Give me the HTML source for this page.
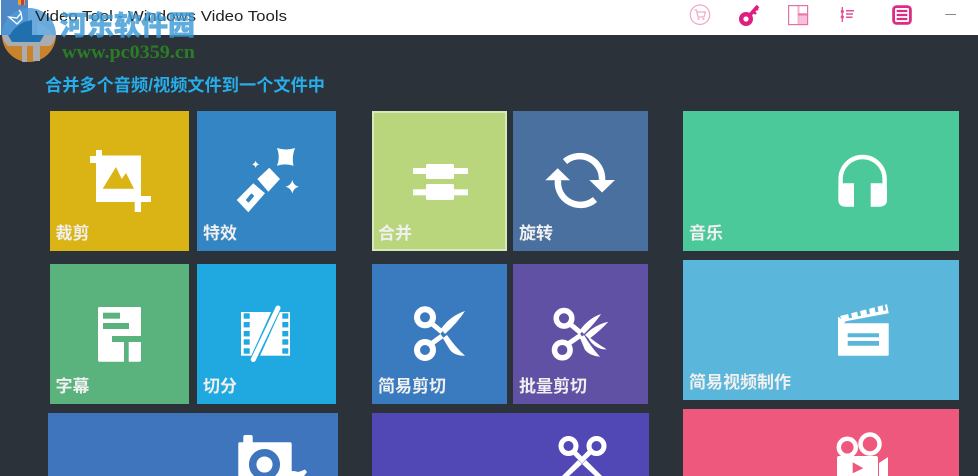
<!DOCTYPE html>
<html><head><meta charset="utf-8"><style>
html,body{margin:0;padding:0;width:978px;height:476px;overflow:hidden;background:#2b323a}
svg{display:block}
.l{font-family:"Liberation Sans","Noto Sans CJK SC",sans-serif;font-weight:700;font-size:17px;fill:#f0f0f0}
</style></head><body>
<svg width="978" height="476" viewBox="0 0 978 476" xmlns="http://www.w3.org/2000/svg">
<rect width="978" height="476" fill="#2b323a"/>
<rect width="978" height="35" fill="#fff"/>

<!-- toolbar icons -->
<g fill="none" stroke="#f3a6c8" stroke-width="1.200"><circle cx="700" cy="14.700" r="9.700"/><path d="M694.500 10h2l1.500 7h6l1.300-5h-8.300"/></g>
<circle cx="698.500" cy="19" r="1" fill="#f3a6c8"/><circle cx="703.500" cy="19" r="1" fill="#f3a6c8"/>
<g fill="none" stroke="#dd1f80"><circle cx="746" cy="19" r="4.800" stroke-width="4.400"/><path d="M750 15l8-9" stroke-width="3.600"/><path d="M753 11l3 3M755.500 8l2.500 2" stroke-width="2.400"/></g>
<rect x="798" y="15.500" width="9.600" height="9" fill="#f6c0da"/>
<rect x="797.500" y="5.500" width="2" height="19" fill="#f3b3d1"/>
<rect x="798" y="13.300" width="9.600" height="2.200" fill="#e878ae"/>
<rect x="788.600" y="5.600" width="19" height="19" fill="none" stroke="#e56fa9" stroke-width="1.200"/>
<g fill="none" stroke="#e0509a"><path d="M842.300 7v15" stroke-width="1.300"/><path d="M846 10.700h8M846 14h7M846 17.300h6.500" stroke-width="1.500"/></g>
<circle cx="842.300" cy="11.500" r="1.600" fill="#e0509a"/><circle cx="842.300" cy="17" r="1.600" fill="#e0509a"/>
<rect x="893.600" y="6.600" width="16.800" height="16.800" rx="3" fill="none" stroke="#dd2a85" stroke-width="2.800"/>
<path d="M896.700 11h10.600M896.700 15h10.600M896.700 19h10.600" stroke="#dd2a85" stroke-width="2.200"/>
<rect x="945.300" y="14" width="10.700" height="1" fill="#888"/>

<text x="45" y="91" font-family="Liberation Sans,Noto Sans CJK SC,sans-serif" font-weight="700" font-size="17.200" fill="#27aeea" textLength="280">合并多个音频/视频文件到一个文件中</text>

<!-- tiles -->
<rect x="50" y="111" width="139" height="140" fill="#dab315"/>
<rect x="197" y="111" width="139" height="140" fill="#3385c3"/>
<rect x="373" y="112" width="133" height="138" fill="#b9d67c" stroke="#d9e8b9" stroke-width="2"/>
<rect x="513" y="111" width="135" height="140" fill="#49709f"/>
<rect x="683" y="111" width="276" height="140" fill="#4cc99b"/>
<rect x="50" y="264" width="139" height="140" fill="#5ab37d"/>
<rect x="197" y="264" width="139" height="140" fill="#20a9e0"/>
<rect x="372" y="264" width="135" height="140" fill="#3a7bbf"/>
<rect x="513" y="264" width="135" height="140" fill="#6151a5"/>
<rect x="683" y="260" width="276" height="140" fill="#5ab6da"/>
<rect x="48" y="413" width="290" height="63" fill="#3e75bc"/>
<rect x="372" y="413" width="277" height="63" fill="#5148b5"/>
<rect x="683" y="409" width="276" height="67" fill="#ee587c"/>

<!-- labels -->
<text class="l" x="55.500" y="239">裁剪</text>
<text class="l" x="203" y="239">特效</text>
<text class="l" x="378" y="239">合并</text>
<text class="l" x="519" y="239">旋转</text>
<text class="l" x="689" y="239">音乐</text>
<text class="l" x="55.500" y="392">字幕</text>
<text class="l" x="203" y="392">切分</text>
<text class="l" x="378" y="392">简易剪切</text>
<text class="l" x="519" y="392">批量剪切</text>
<text class="l" x="689" y="388">简易视频制作</text>

<!-- crop -->
<path d="M96 155.500h45v46.500H96z" fill="#fff"/>
<path d="M90 156h6v7h-6zM96 150h6v6h-6zM141 196h10v6h-10zM134.700 202h6.300v10h-6.300z" fill="#fff"/>
<path d="M102.700 188.700L116 167l5.700 12 4.300-6 8 15.700z" fill="#dab315"/>

<!-- wand -->
<g fill="#fff">
<path d="M277 148Q286 151 295 148Q291.500 157 293.500 165.700Q285 163 277 165.700Q280.500 157 277 148z"/>
<path d="M292.300 180Q293.500 185.500 298.800 186.700Q293.500 188 292.300 193.500Q291 188 285.500 186.700Q291 185.500 292.300 180z"/>
<path d="M255.700 160.500Q256.200 163.800 259.500 164.300Q256.200 165 255.700 168Q255 165 252 164.300Q255 163.800 255.700 160.500z"/>
<path d="M257.300 179L269.300 167.700L280 179L268.300 191.700z"/>
<path d="M236.700 200L253.300 183.300L265 193.300L248.300 212.300z"/>
</g>
<rect x="-4.500" y="-2" width="9" height="4" rx="1" transform="translate(250 198) rotate(-50)" fill="#3385c3"/>

<!-- merge -->
<g fill="#fff"><rect x="413" y="168" width="55" height="6"/><rect x="413" y="189.300" width="55" height="6"/><rect x="426" y="164" width="28" height="15" rx="1.500"/><rect x="426" y="184" width="28" height="16" rx="1.500"/></g>

<!-- rotate -->
<g fill="none" stroke="#fff" stroke-width="6.500"><path d="M565 161.500A22.500 22.500 0 0 1 602 180"/><path d="M595 199.500A22.500 22.500 0 0 1 558 180"/></g>
<path d="M589.300 180h25.700l-12.900 12.500zM545.300 180.300h24.700l-12.300-12z" fill="#fff"/>

<!-- headphones -->
<path d="M840.600 190v-11a22 22 0 0 1 44 0v11" fill="none" stroke="#fff" stroke-width="4.400"/>
<path d="M838.300 189q0-5.700 6-5.700h9.700v23.400h-8q-7.700 0-7.700-7zM887 189q0-5.700-6-5.700h-10.300v23.400h8q8.300 0 8.300-7z" fill="#fff"/>

<!-- subtitle doc -->
<path d="M98 308.500q0-1.500 1.500-1.500h40q1.500 0 1.500 1.500V360q0 1.700-1.500 1.700H99.500q-1.500 0-1.500-1.700z" fill="#fff"/>
<rect x="103" y="312.700" width="17" height="6" fill="#5ab37d"/>
<rect x="103" y="323" width="26" height="6" fill="#5ab37d"/>
<rect x="112" y="336" width="29" height="6" fill="#5ab37d"/>
<rect x="124" y="342" width="4.700" height="20" fill="#5ab37d"/>

<!-- film -->
<rect x="241" y="312" width="49" height="43.700" fill="#fff"/>
<g fill="#20a9e0">
<rect x="243.700" y="313.300" width="6" height="5.400"/><rect x="243.700" y="322" width="6" height="5.400"/><rect x="243.700" y="331" width="6" height="5.400"/><rect x="243.700" y="339.300" width="6" height="5.400"/><rect x="243.700" y="348.300" width="6" height="5.400"/>
<rect x="282.300" y="313.300" width="6" height="5.400"/><rect x="282.300" y="322" width="6" height="5.400"/><rect x="282.300" y="331" width="6" height="5.400"/><rect x="282.300" y="339.300" width="6" height="5.400"/><rect x="282.300" y="348.300" width="6" height="5.400"/>
</g>
<path d="M278 306.500L253.300 361" stroke="#20a9e0" stroke-width="8"/>
<path d="M278 308L253.300 359.500" stroke="#fff" stroke-width="5" stroke-linecap="round"/>

<!-- scissors 1 -->
<g fill="none" stroke="#fff" stroke-width="6"><circle cx="425" cy="317.300" r="8"/><circle cx="425" cy="350" r="8"/></g>
<path d="M431 323l11 9M431 344l11-8" fill="none" stroke="#fff" stroke-width="5"/>
<path d="M441 329Q450 316 465 311Q458 322 445 334zM442.700 338L447 335Q456 348 465 355.700Q455 356 450 350z" fill="#fff"/>

<!-- scissors 2 -->
<g fill="none" stroke="#fff" stroke-width="5.500"><circle cx="564" cy="318.300" r="7.800"/><circle cx="562.300" cy="350" r="7.800"/></g>
<path d="M570 324l11 9M568 344l13-9" fill="none" stroke="#fff" stroke-width="5"/>
<path d="M580 330Q589 318 601 314Q596 322 584 334zM585 335Q594 325 608.300 321.700Q601 330 589 339zM580 338L584 335Q591 347 600 356.700Q590 356 585 350zM586.700 335Q596 343 606.700 349.300Q597 350 590 341z" fill="#fff"/>

<!-- clapper -->
<path d="M838 323.300h50.700v31.400q0 1-1 1H839q-1 0-1-1z" fill="#fff"/>
<path d="M847.700 333.300H879v4h-31.300zM847.700 341H879v4.700h-31.300z" fill="#5ab6da"/>
<path d="M838 316.700v11l7.700-6z" fill="#fff"/>
<path d="M840 316L887 304.300L888.700 313.300L843 321.700z" fill="#fff"/>
<g fill="#5ab6da"><path d="M848 313l3-.7 1 5.500-3 .6zM857 311l3-.7 1 5.500-3 .6zM866 309l3-.7 1 5.500-3 .6zM874.500 307l3-.7 1 5.500-3 .6zM882.500 305.500l2.500-.6 1 5.500-2.500.5z"/></g>

<!-- camera bottom-left -->
<path d="M238.300 443.500q0-1.200 1.200-1.200h3.800V437q0-2 2-2h5.400q2 0 2 2v5.300h37q2 0 2 2V476H238.300z" fill="#fff"/>
<circle cx="264.500" cy="464.500" r="11.800" fill="#fff" stroke="#3e75bc" stroke-width="7.500"/>
<path d="M278 476Q280 469 284 470Q288 473 292 471Q296 471 298 472Q302 471 305 469.500L307 472L304 476z" fill="#fff"/>

<!-- scissors bottom -->
<g fill="none" stroke="#fff" stroke-width="5"><circle cx="568.500" cy="446" r="7.500"/><circle cx="596.500" cy="446" r="7.500"/><path d="M574 452l8 8 8-8"/></g>
<path d="M578 460l4 4-13 12h-7zM586 460l-4 4 13 12h7z" fill="#fff"/>

<!-- video camera -->
<g fill="none" stroke="#fff" stroke-width="4.500"><circle cx="847.300" cy="447.300" r="8.500"/><circle cx="870" cy="444" r="9.500"/></g>
<path d="M837 458q0-2 2-2h37q2 0 2 2v18h-41zM879 463l9-6v19h-9z" fill="#fff"/>
<path d="M852.700 462.300l10.600 6-10.600 5z" fill="#ee587c"/>

<!-- watermark logo -->
<path d="M2 35a27 27 0 0 0 54 0z" fill="#c9832a"/>
<path d="M2 35h54q-1 7-6 11H8Q3 42 2 35z" fill="#a9acb0"/>
<path d="M8 35H44l-4 7H12z" fill="#1f70ad"/>
<rect x="22" y="46" width="5" height="16" fill="#a9acb0"/><rect x="33" y="46" width="7" height="15" fill="#a9acb0"/>
<rect x="1" y="0" width="27" height="35" fill="#4f86c6"/>
<rect x="18" y="0" width="7" height="5" fill="#e9a12c"/><rect x="21" y="0" width="3" height="5" fill="#d0392f"/>
<path d="M2 35A27 27 0 0 1 56 35z" fill="#4f9ad6" opacity=".85"/>
<path d="M10 35Q14 27 24 22L32 20V35z" fill="#1f70ad"/>
<path d="M37 35V22Q48 26 53 35z" fill="#6fb0de"/>
<path d="M9 17l8 1 4-5 1 6-5 5zM19 10l2 3" fill="none" stroke="#fff" stroke-width="1.300"/>

<!-- title, visible through the watermark -->
<text x="35" y="21" font-family="Liberation Sans,sans-serif" font-size="15" fill="#222" textLength="252" lengthAdjust="spacingAndGlyphs">Video Tool - Windows Video Tools</text>

<!-- watermark text -->
<text x="60" y="35" font-family="Noto Sans CJK SC,sans-serif" font-weight="900" font-size="27" fill="#3c9ad6" stroke="#3c9ad6" stroke-width=".5" opacity=".82">河东软件园</text>
<text x="62" y="58" font-family="Liberation Serif,serif" font-weight="700" font-size="19" fill="#2b7d25" textLength="133" lengthAdjust="spacingAndGlyphs">www.pc0359.cn</text>
</svg>
</body></html>
